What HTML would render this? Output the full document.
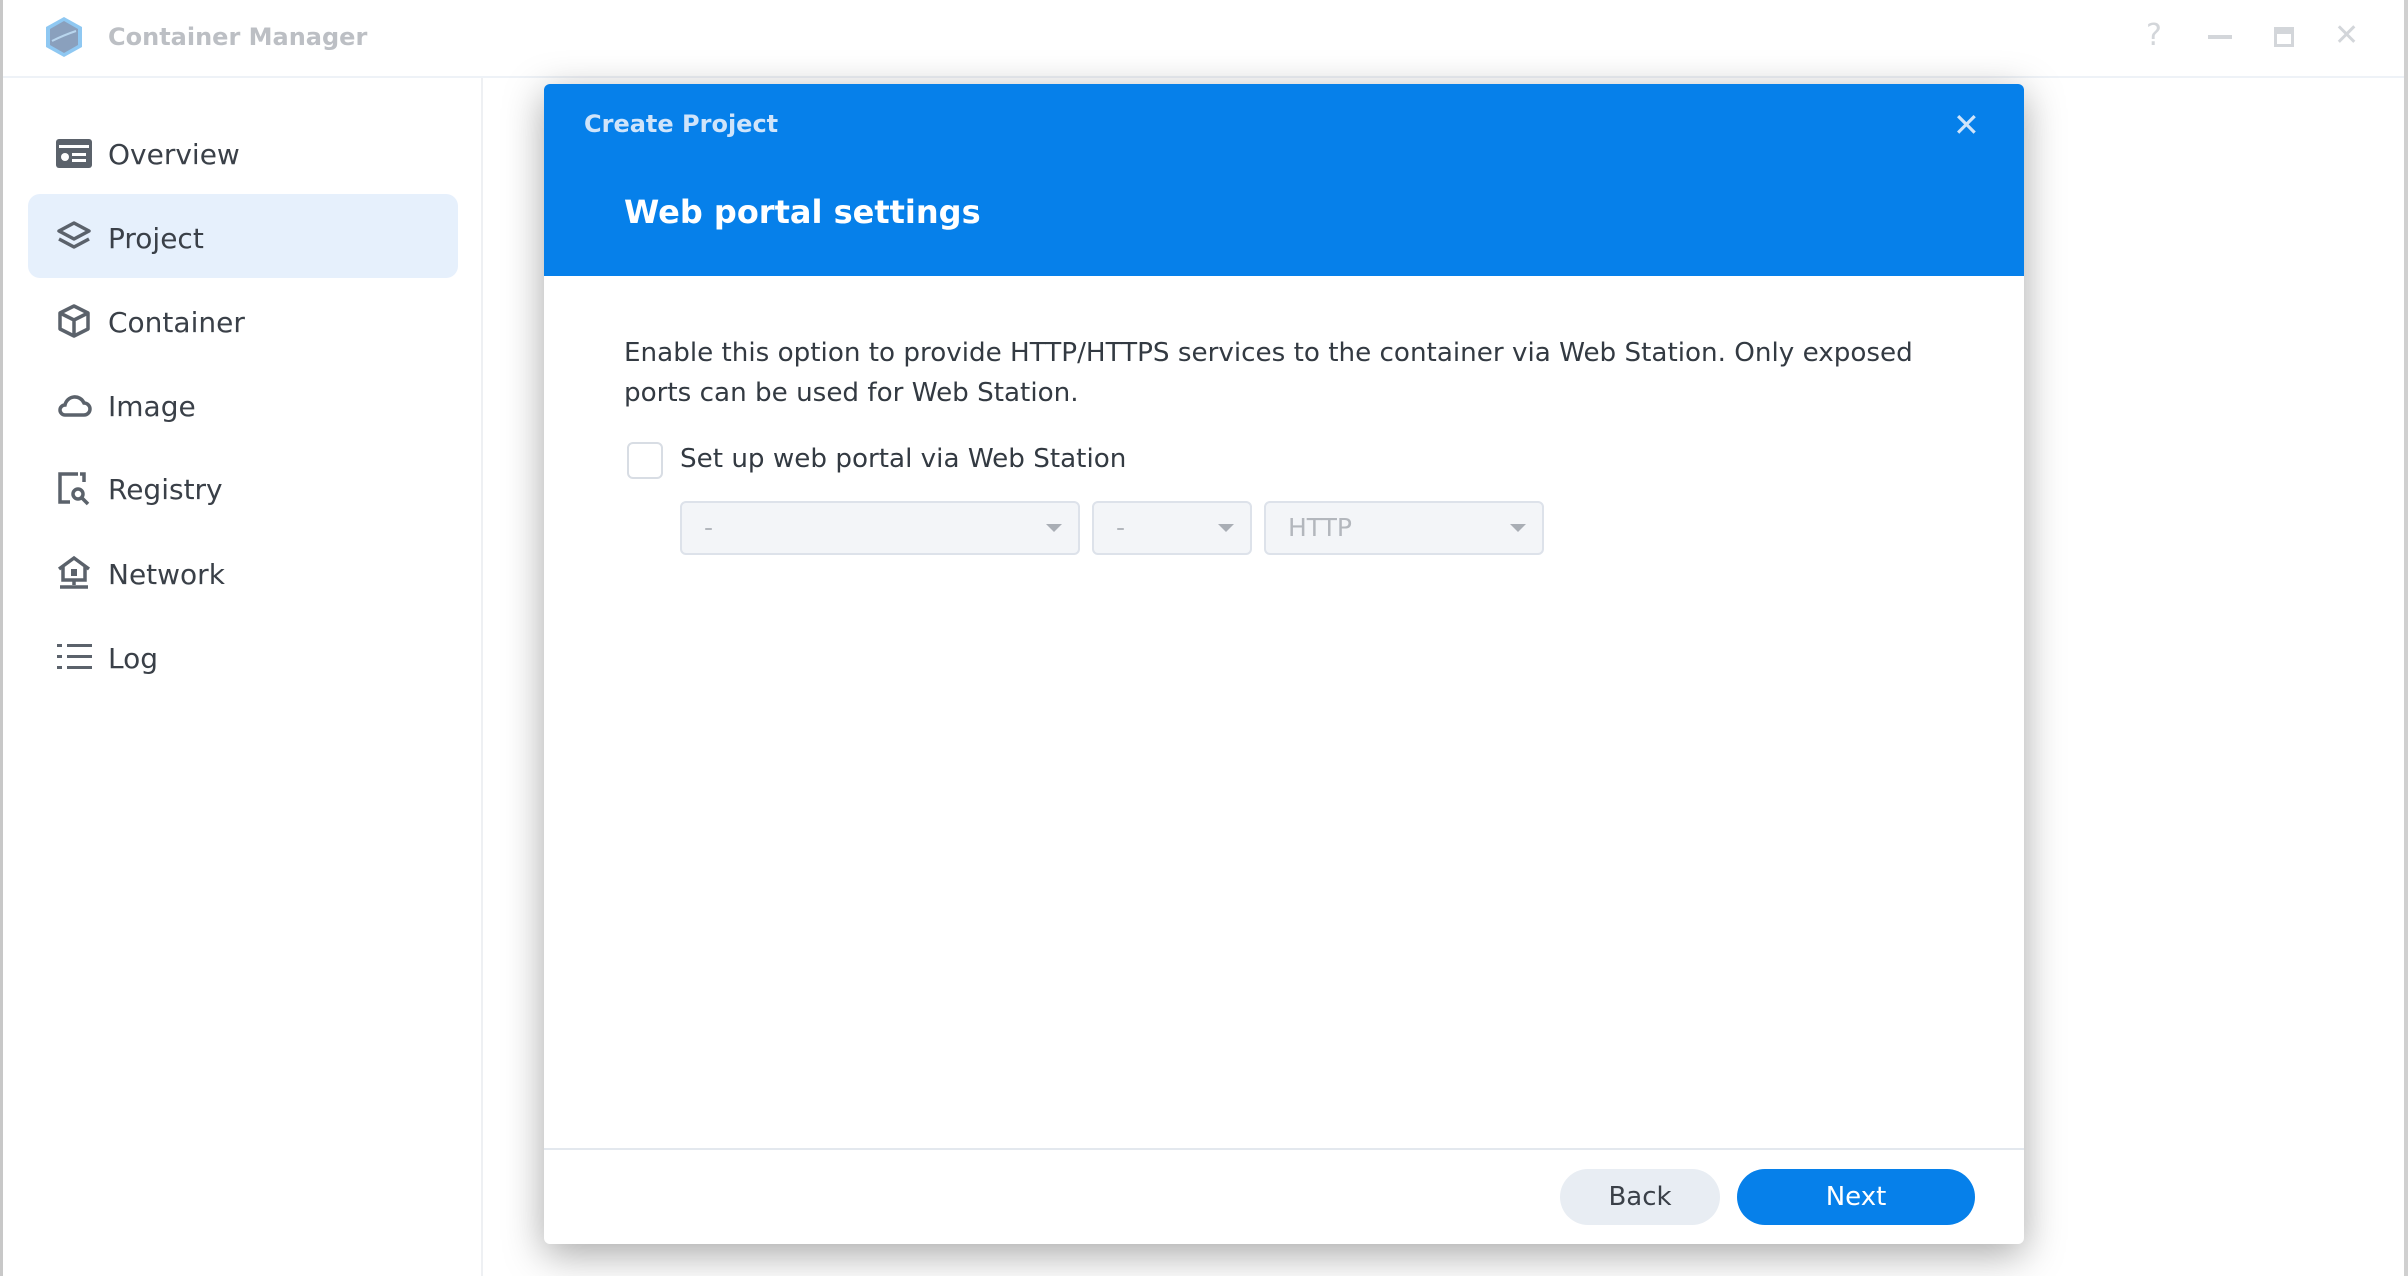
<!DOCTYPE html>
<html><head><meta charset="utf-8"><style>
*{margin:0;padding:0;box-sizing:border-box}
body{width:2408px;height:1276px;overflow:hidden;background:#fff;font-family:"DejaVu Sans",sans-serif;position:relative;color:#333a42}
.abs{position:absolute}
.nav{position:absolute;left:108px;font-family:"DejaVu Sans",sans-serif;font-size:28px;color:#3a4048;line-height:1}
.ic{position:absolute;left:56px;width:36px;height:36px}
.dd{position:absolute;top:501px;height:54px;background:#f3f5f8;border:2px solid #dde2ea;border-radius:6px;color:#b3b7bd;font-size:25px;line-height:50px;padding-left:22px}
.dd:after{content:"";position:absolute;right:16px;top:21px;border-left:8px solid transparent;border-right:8px solid transparent;border-top:8px solid #a9aeb5}
</style></head><body>
<div class="abs" style="left:0;top:0;width:3px;height:1276px;background:#c8c8c8"></div>
<div class="abs" style="left:2404px;top:0;width:4px;height:1276px;background:#d0d0d0"></div>
<div class="abs" style="left:3px;top:76px;width:2401px;height:2px;background:#eef2f7"></div>
<div class="abs" style="left:481px;top:78px;width:2px;height:1198px;background:#eef0f3"></div>
<svg class="abs" style="left:42px;top:15px" width="44" height="44" viewBox="0 0 44 44"><polygon points="22,2 40,12 40,32 22,42 4,32 4,12" fill="#8fc8f2"/><polygon points="22,6 36,14 36,30 22,38 8,30 8,14" fill="#8aa0bd"/><path d="M10 26 Q22 20 34 16" stroke="#b9d6ee" stroke-width="2" fill="none"/></svg>
<div class="abs" style="left:108px;top:23px;font-weight:bold;font-size:24px;color:#bcbfc4">Container Manager</div>
<div class="abs" style="left:2146px;top:18px;font-size:30px;color:#d3d6da">?</div>
<div class="abs" style="left:2208px;top:35px;width:24px;height:4px;background:#d3d6da"></div>
<div class="abs" style="left:2274px;top:27px;width:20px;height:20px;border:3px solid #d3d6da;border-top-width:7px"></div>
<div class="abs" style="left:2334px;top:18px;font-size:30px;color:#d3d6da">✕</div>

<div class="abs" style="left:28px;top:194px;width:430px;height:84px;background:#e6f0fc;border-radius:12px"></div>
<svg class="ic" style="top:136px" viewBox="0 0 36 36"><rect x="0" y="3" width="36" height="29" rx="3" fill="#5b626b"/><rect x="3" y="9" width="30" height="3" fill="#fff"/><circle cx="9" cy="21" r="4" fill="#fff"/><rect x="16" y="17" width="14" height="3" fill="#fff"/><rect x="16" y="23" width="14" height="3" fill="#fff"/></svg>
<div class="nav" style="top:141px">Overview</div>
<svg class="ic" style="top:219px" viewBox="0 0 36 36" fill="none" stroke="#5b626b" stroke-width="3.5" stroke-linejoin="round"><path d="M18 4 L33 12 L18 20 L3 12 Z"/><path d="M3 20 L18 28 L33 20"/></svg>
<div class="nav" style="top:225px">Project</div>
<svg class="ic" style="top:303px" viewBox="0 0 36 36" fill="none" stroke="#5b626b" stroke-width="3.5" stroke-linejoin="round"><path d="M18 3 L32 10 L32 26 L18 33 L4 26 L4 10 Z"/><path d="M4 10 L18 17 L32 10 M18 17 L18 33"/></svg>
<div class="nav" style="top:309px">Container</div>
<svg class="ic" style="top:387px" viewBox="0 0 36 36" fill="none" stroke="#5b626b" stroke-width="3.5"><path d="M9 28 H28 A6 6 0 0 0 28 16 A10 10 0 0 0 9 18 A5 5 0 0 0 9 28 Z"/></svg>
<div class="nav" style="top:393px">Image</div>
<svg class="ic" style="top:470px" viewBox="0 0 36 36" fill="none" stroke="#5b626b" stroke-width="3.5"><path d="M22 4 H4 V32 H14 M24 4 H28 V12"/><circle cx="22" cy="24" r="5"/><path d="M26 28 L32 34"/></svg>
<div class="nav" style="top:476px">Registry</div>
<svg class="ic" style="top:555px" viewBox="0 0 36 36" fill="none" stroke="#5b626b" stroke-width="3.5"><path d="M3 14 L18 3 L33 14 M7 11 V25 H29 V11"/><rect x="15" y="14" width="6" height="7" fill="#5b626b" stroke="none"/><path d="M18 25 V30 M4 32 H32"/></svg>
<div class="nav" style="top:561px">Network</div>
<svg class="ic" style="top:639px" viewBox="0 0 36 36" fill="#5b626b"><rect x="1" y="5" width="5" height="3"/><rect x="11" y="5" width="25" height="3"/><rect x="1" y="16" width="5" height="3"/><rect x="11" y="16" width="25" height="3"/><rect x="1" y="27" width="5" height="3"/><rect x="11" y="27" width="25" height="3"/></svg>
<div class="nav" style="top:645px">Log</div>

<div class="abs" style="left:544px;top:84px;width:1480px;height:1160px;background:#fff;border-radius:6px;box-shadow:0 10px 40px rgba(0,0,0,.35);overflow:hidden">
 <div class="abs" style="left:0;top:0;width:1480px;height:192px;background:#0680ea"></div>
 <div class="abs" style="left:40px;top:26px;font-size:24px;font-weight:bold;color:#cfe4fa">Create Project</div>
 <div class="abs" style="left:1409px;top:22px;font-size:32px;font-weight:bold;color:#cfe4fa">✕</div>
 <div class="abs" style="left:80px;top:109px;font-size:32px;font-weight:bold;color:#fff">Web portal settings</div>
 <div class="abs" style="left:80px;top:249px;font-size:26.2px;line-height:40px;color:#333a42;white-space:nowrap">Enable this option to provide HTTP/HTTPS services to the container via Web Station. Only exposed<br>ports can be used for Web Station.</div>
 <div class="abs" style="left:83px;top:358px;width:36px;height:37px;border:2px solid #d8dde4;border-radius:6px"></div>
 <div class="abs" style="left:136px;top:360px;font-size:26.2px;color:#333a42">Set up web portal via Web Station</div>
 <div class="abs" style="left:0;top:1064px;width:1480px;height:2px;background:#e3e8ee"></div>
 <div class="abs" style="left:1016px;top:1085px;width:160px;height:56px;background:#e8edf3;border-radius:28px;text-align:center;line-height:56px;font-size:26px;color:#3a4048">Back</div>
 <div class="abs" style="left:1193px;top:1085px;width:238px;height:56px;background:#0680ea;border-radius:28px;text-align:center;line-height:56px;font-size:26px;color:#fff">Next</div>
</div>
<div class="dd" style="left:680px;width:400px">-</div>
<div class="dd" style="left:1092px;width:160px">-</div>
<div class="dd" style="left:1264px;width:280px">HTTP</div>
</body></html>
